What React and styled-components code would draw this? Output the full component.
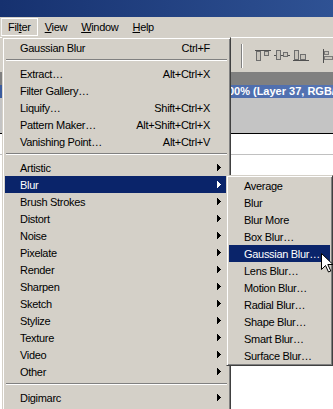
import styled, { createGlobalStyle } from 'styled-components';

const GlobalStyle = createGlobalStyle`
  html, body { margin: 0; padding: 0; }
  body { font-family: "Liberation Sans", Arial, sans-serif; }
`;

const filterMenu = [
  { label: 'Gaussian Blur', shortcut: 'Ctrl+F' },
  'sep',
  { label: 'Extract…', shortcut: 'Alt+Ctrl+X' },
  { label: 'Filter Gallery…' },
  { label: 'Liquify…', shortcut: 'Shift+Ctrl+X' },
  { label: 'Pattern Maker…', shortcut: 'Alt+Shift+Ctrl+X' },
  { label: 'Vanishing Point…', shortcut: 'Alt+Ctrl+V' },
  'sep',
  { label: 'Artistic', sub: true },
  { label: 'Blur', sub: true, active: true },
  { label: 'Brush Strokes', sub: true },
  { label: 'Distort', sub: true },
  { label: 'Noise', sub: true },
  { label: 'Pixelate', sub: true },
  { label: 'Render', sub: true },
  { label: 'Sharpen', sub: true },
  { label: 'Sketch', sub: true },
  { label: 'Stylize', sub: true },
  { label: 'Texture', sub: true },
  { label: 'Video', sub: true },
  { label: 'Other', sub: true },
  'sep',
  { label: 'Digimarc', sub: true },
];

const blurMenu = [
  { label: 'Average' },
  { label: 'Blur' },
  { label: 'Blur More' },
  { label: 'Box Blur…' },
  { label: 'Gaussian Blur…', active: true },
  { label: 'Lens Blur…' },
  { label: 'Motion Blur…' },
  { label: 'Radial Blur…' },
  { label: 'Shape Blur…' },
  { label: 'Smart Blur…' },
  { label: 'Surface Blur…' },
];

const SubArrow = ({ active }) => (
  <svg width="4" height="7" viewBox="0 0 4 7" shapeRendering="crispEdges">
    <path d="M0 0h1v7H0z M1 1h1v5H1z M2 2h1v3H2z M3 3h1v1H3z" fill={active ? '#fff' : '#000'} />
  </svg>
);

const AlignIcon = ({ kind }) => {
  const bar = { fill: '#c8c4bc', stroke: '#6e6e6e' };
  if (kind === 'top')
    return (
      <svg width="16" height="13" viewBox="0 0 16 13" shapeRendering="crispEdges">
        <rect x="0" y="0" width="16" height="1" fill="#505050" />
        <rect x="1.5" y="1.5" width="4" height="9" {...bar} />
        <rect x="9.5" y="1.5" width="4" height="4" {...bar} />
      </svg>
    );
  if (kind === 'middle')
    return (
      <svg width="16" height="13" viewBox="0 0 16 13" shapeRendering="crispEdges">
        <rect x="0" y="5" width="16" height="1" fill="#505050" />
        <rect x="2.5" y="0.5" width="4" height="9" {...bar} />
        <rect x="9.5" y="2.5" width="4" height="4" {...bar} />
      </svg>
    );
  if (kind === 'bottom')
    return (
      <svg width="16" height="13" viewBox="0 0 16 13" shapeRendering="crispEdges">
        <rect x="0" y="10" width="16" height="1" fill="#505050" />
        <rect x="1.5" y="0.5" width="4" height="9" {...bar} />
        <rect x="7.5" y="4.5" width="5" height="5" {...bar} />
      </svg>
    );
  return (
    <svg width="12" height="16" viewBox="0 0 12 16" shapeRendering="crispEdges">
      <rect x="0" y="0" width="1" height="16" fill="#505050" />
      <rect x="1.5" y="2.5" width="5" height="4" {...bar} />
      <rect x="1.5" y="8.5" width="10" height="4" {...bar} />
    </svg>
  );
};

const Cursor = () => (
  <CursorWrap>
    <svg width="13" height="20" viewBox="0 0 13 20">
      <path
        d="M0.5 0.5 L0.5 16.5 L4.5 12.5 L7.5 19 L9.8 18 L6.8 11.5 L12 11.5 Z"
        fill="#fff"
        stroke="#000"
        strokeWidth="1"
        strokeLinejoin="miter"
      />
    </svg>
  </CursorWrap>
);

const MenuList = ({ items }) =>
  items.map((item, i) =>
    item === 'sep' ? (
      <Separator key={i} />
    ) : (
      <Item key={i} $active={item.active}>
        <Label>{item.label}</Label>
        {item.shortcut && <Shortcut>{item.shortcut}</Shortcut>}
        <ArrowCell>{item.sub && <SubArrow active={item.active} />}</ArrowCell>
      </Item>
    )
  );

export default function App() {
  return (
    <Screen>
      <GlobalStyle />
      <AppTitle />
      <MenuBar>
        <MenuBarItem $open>
          Fil<Key>t</Key>er
        </MenuBarItem>
        <MenuBarItem>
          <Key>V</Key>iew
        </MenuBarItem>
        <MenuBarItem>
          <Key>W</Key>indow
        </MenuBarItem>
        <MenuBarItem>
          <Key>H</Key>elp
        </MenuBarItem>
      </MenuBar>
      <Toolbar>
        <ToolSep />
        <IconGroup>
          <AlignIcon kind="top" />
          <AlignIcon kind="middle" />
          <AlignIcon kind="bottom" />
        </IconGroup>
        <AlignIcon kind="left" />
      </Toolbar>
      <Workspace />
      <DocTitle>@ 100% (Layer 37, RGB/8)</DocTitle>
      <DocFrame />
      <Canvas>
        <GuideLine />
      </Canvas>

      <FilterMenu>
        <MenuList items={filterMenu} />
      </FilterMenu>
      <BlurMenu>
        <MenuList items={blurMenu} />
      </BlurMenu>
      <Cursor />
    </Screen>
  );
}

const Screen = styled.div`
  position: relative;
  width: 333px;
  height: 409px;
  overflow: hidden;
  background: #d4d0c8;
  display: flex;
  flex-direction: column;
  font-size: 11px;
  letter-spacing: -0.3px;
  color: #000;
`;

const AppTitle = styled.div`
  height: 17px;
  flex: none;
  background: linear-gradient(90deg, #16316f, #2f5294);
`;

const MenuBar = styled.div`
  height: 20px;
  flex: none;
  display: flex;
  align-items: flex-end;
  padding: 0 0 1px 1px;
  box-sizing: border-box;
`;

const MenuBarItem = styled.div`
  height: 18px;
  line-height: 17px;
  padding: 0 6px;
  box-sizing: border-box;
  border: 1px solid ${(p) => (p.$open ? '#ffffff' : 'transparent')};
  border-left-color: ${(p) => (p.$open ? '#f4f4f4' : 'transparent')};
`;

const Key = styled.span`
  text-decoration: underline;
`;

const Toolbar = styled.div`
  height: 35px;
  flex: none;
  box-sizing: border-box;
  border-top: 1px solid #ffffff;
  display: flex;
  align-items: center;
  padding-left: 241px;
  padding-top: 2px;
`;

const ToolSep = styled.div`
  width: 1px;
  height: 24px;
  background: #808080;
  border-right: 1px solid #ffffff;
  margin-right: 12px;
`;

const IconGroup = styled.div`
  display: flex;
  align-items: center;
  gap: 3px;
  margin-right: 14px;
`;

const Workspace = styled.div`
  height: 13px;
  flex: none;
  background: #808080;
`;

const DocTitle = styled.div`
  height: 13px;
  flex: none;
  background: linear-gradient(90deg, #3a5b9e, #5574b3);
  color: #fff;
  font-weight: bold;
  letter-spacing: 0;
  line-height: 13px;
  padding-left: 208px;
  white-space: nowrap;
  overflow: hidden;
`;

const DocFrame = styled.div`
  height: 35px;
  flex: none;
  background: #c4c4c4;
  border-bottom: 1px solid #000;
`;

const Canvas = styled.div`
  flex: 1;
  background: #ffffff;
  padding-top: 20px;
`;

const GuideLine = styled.div`
  height: 1px;
  background: #c0c0c0;
`;

const MenuBox = styled.div`
  position: absolute;
  box-sizing: border-box;
  background: #d4d0c8;
  border: 1px solid;
  border-color: #d4d0c8 #404040 #404040 #d4d0c8;
  box-shadow: inset 1px 1px 0 #ffffff, inset -1px -1px 0 #808080;
  padding: 1px 2px 1px 2px;
`;

const FilterMenu = styled(MenuBox)`
  left: 2px;
  top: 37px;
  width: 229px;
  height: 376px;
`;

const BlurMenu = styled(MenuBox)`
  left: 226px;
  top: 175px;
  width: 107px;
`;

const Item = styled.div`
  height: 17px;
  display: flex;
  align-items: center;
  padding-left: 15px;
  white-space: nowrap;
  background: ${(p) => (p.$active ? '#0a246a' : 'transparent')};
  color: ${(p) => (p.$active ? '#ffffff' : '#000000')};
`;

const Label = styled.span`
  flex: 1;
`;

const Shortcut = styled.span`
  text-align: right;
`;

const ArrowCell = styled.span`
  width: 18px;
  flex: none;
  display: flex;
  align-items: center;
  padding-left: 7px;
  box-sizing: border-box;
`;

const Separator = styled.div`
  height: 9px;
  box-sizing: border-box;
  padding-top: 3px;
  margin: 0 1px;

  &::before {
    content: '';
    display: block;
    height: 1px;
    background: #808080;
    border-bottom: 1px solid #ffffff;
  }
`;

const CursorWrap = styled.div`
  position: absolute;
  left: 321px;
  top: 253px;
  line-height: 0;
`;
